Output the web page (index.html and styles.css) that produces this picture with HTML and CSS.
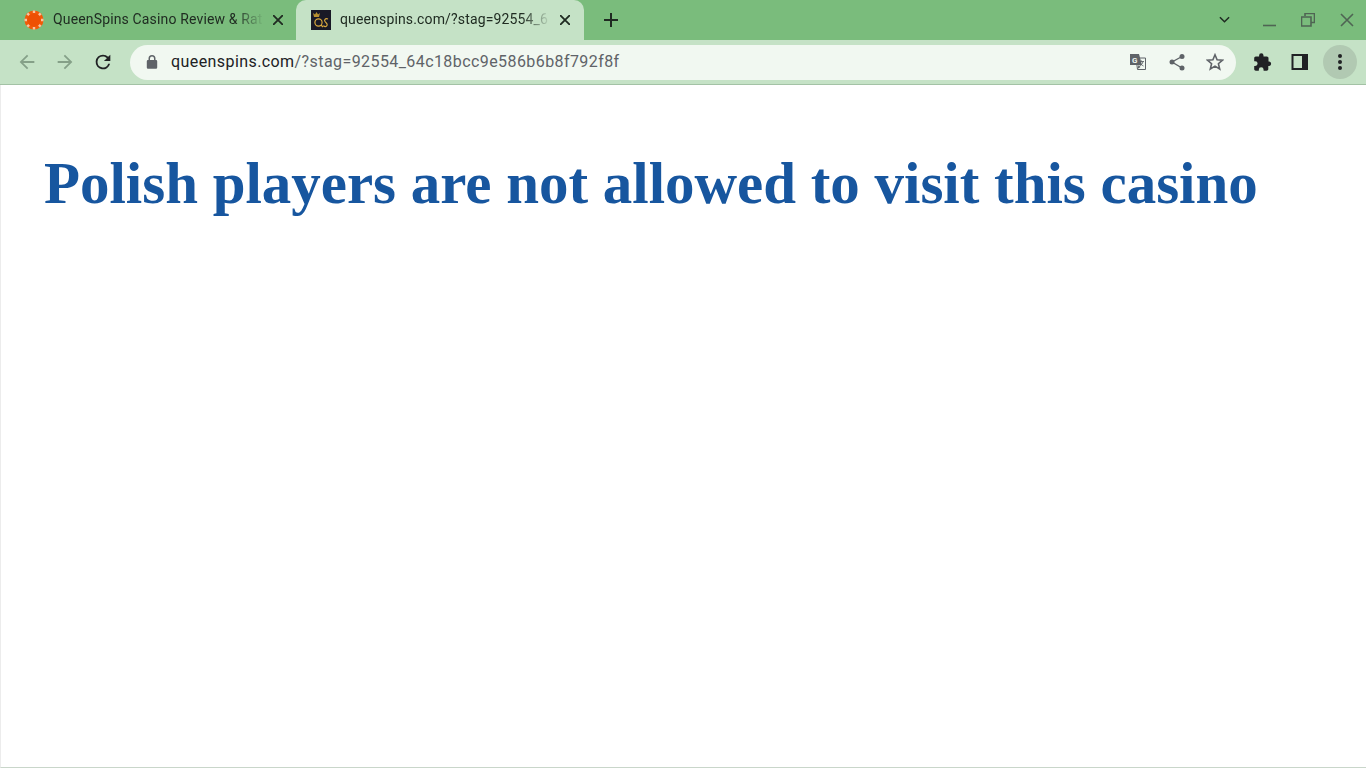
FILE: index.html
```html
<!DOCTYPE html>
<html lang="en">
<head>
  <meta charset="UTF-8" />
  <title>queenspins.com</title>
  <link rel="stylesheet" href="styles.css">
</head>
<body>

  <div class="tabstrip">
    <div class="tab">
      <svg class="favicon" viewBox="0 0 20 20">
        <circle cx="10" cy="10" r="9.500" fill="#f25a08"/>
        <circle cx="10" cy="10" r="6.500" fill="#ee5003"/>
        <g stroke="#f8c4a0" stroke-width="2.400">
          <path d="M10 .5v2.500M10 17v2.500M.5 10H3M17 10h2.500M3.300 3.300l1.800 1.800M14.900 14.900l1.800 1.800M16.700 3.300l-1.800 1.800M3.300 16.700l1.800-1.800"/>
        </g>
      </svg>
      <span class="tab-title">QueenSpins Casino Review &amp; Rat</span>
      <svg class="tab-close" viewBox="0 0 10 10"><path d="M0 0l10 10M10 0L0 10"/></svg>
    </div>
    <div class="tab active">
      <svg class="favicon" viewBox="0 0 20 20">
        <rect width="20" height="20" fill="#191926"/>
        <path d="M2 3l2 1.500L5.500 2 7 4.500 9 3l-1 4H3z" fill="#b8912f"/>
        <circle cx="7.500" cy="12.500" r="3.600" fill="none" stroke="#d9a93e" stroke-width="1.200"/>
        <path d="M10 15l2 2M17 9c-3-1-4 1-3 2.500s3 2 2 4-3 1-3.500 0" fill="none" stroke="#d9a93e" stroke-width="1.200"/>
      </svg>
      <span class="tab-title">queenspins.com/?stag=92554_6</span>
      <svg class="tab-close" viewBox="0 0 10 10"><path d="M0 0l10 10M10 0L0 10"/></svg>
    </div>
    <svg class="new-tab" viewBox="0 0 14 14"><path d="M7 0v14M0 7h14"/></svg>
    <div class="window-controls">
      <svg class="tab-search" viewBox="0 0 12 8"><path d="M1 1l5 5 5-5"/></svg>
      <svg class="win-btn" viewBox="0 0 14 14"><path d="M0 12.500h13"/></svg>
      <svg class="win-btn" viewBox="0 0 14 14"><path d="M4 3V.5h9.500v9H10M.5 4H10v9H.5z"/></svg>
      <svg class="win-btn" viewBox="0 0 14 14"><path d="M1 1l12 12M13 1L1 13"/></svg>
    </div>
  </div>

  <div class="toolbar">
    <svg class="nav-btn dim" viewBox="0 0 24 24"><path d="M20 11H7.800l5.600-5.600L12 4l-8 8 8 8 1.400-1.400L7.800 13H20z"/></svg>
    <svg class="nav-btn dim" viewBox="0 0 24 24"><path d="M4 11h12.200l-5.600-5.600L12 4l8 8-8 8-1.400-1.400 5.600-5.600H4z"/></svg>
    <svg class="nav-btn" viewBox="0 0 24 24"><path d="M17.650 6.350A7.960 7.960 0 0 0 12 4a8 8 0 1 0 7.730 10h-2.080A6 6 0 1 1 12 6c1.660 0 3.140.69 4.220 1.780L13 11h7V4z"/></svg>
    <div class="omnibox">
      <svg class="lock" viewBox="0 0 12 14"><path d="M10 5H9.500V3.500a3.500 3.500 0 0 0-7 0V5H2a1.200 1.200 0 0 0-1.200 1.200v6.300A1.200 1.200 0 0 0 2 13.700h8a1.200 1.200 0 0 0 1.200-1.200V6.200A1.200 1.200 0 0 0 10 5zM4 5V3.500a2 2 0 0 1 4 0V5z"/></svg>
      <span class="url"><span class="host">queenspins.com</span>/?stag=92554_64c18bcc9e586b6b8f792f8f</span>
      <div class="omni-actions">
        <svg class="omni-icon" viewBox="0 0 18 18">
          <path d="M7 5h9.500v11.500H8.500z" fill="#f1f8f1" stroke="#5f6368"/>
          <path d="M1 1h9l3 11H1z" fill="#5f6368"/>
          <path d="M9.500 12l-1 4 3-2z" fill="#5f6368"/>
          <text x="3" y="10" class="glyph">G</text>
          <path d="M10 8.500h5M12.500 7.500v1M14 8.500c-.5 2.500-2 4-3.500 4.500M11 9.500c.5 1.500 2 3 3.500 3.500" fill="none" stroke="#5f6368" stroke-width=".9"/>
        </svg>
        <svg class="omni-icon" viewBox="0 0 18 18">
          <circle cx="14" cy="3.500" r="2.500" fill="#5f6368"/><circle cx="4" cy="9" r="2.500" fill="#5f6368"/><circle cx="14" cy="15" r="2.500" fill="#5f6368"/>
          <path d="M14 3.500L4 9l10 6" fill="none" stroke="#5f6368" stroke-width="1.400"/>
        </svg>
        <svg class="omni-icon" viewBox="0 0 18 18"><path d="M9 1.800l2.100 5 5.400.4-4.100 3.500 1.300 5.300L9 13.100 4.300 16l1.300-5.300L1.500 7.200l5.400-.4z" fill="none" stroke="#5f6368" stroke-width="1.600"/></svg>
      </div>
    </div>
    <svg class="ext-btn puzzle" viewBox="0 0 18 18"><path d="M15.500 8.500h-1V5.200c0-.9-.7-1.700-1.700-1.700H9.500v-1a2.200 2.200 0 0 0-4.400 0v1H1.800C.9 3.500.2 4.300.2 5.200v3h1a2.400 2.400 0 0 1 0 4.800h-1v3c0 .9.700 1.700 1.600 1.700h3v-1a2.400 2.400 0 0 1 4.800 0v1h3c1 0 1.700-.8 1.700-1.700v-3h1a2.300 2.300 0 0 0 0-4.500z"/></svg>
    <svg class="ext-btn" viewBox="0 0 18 18"><path fill-rule="evenodd" d="M.5 1h16.500v16H.5zM2.500 3v12H11V3z"/></svg>
    <div class="menu-btn"><span></span><span></span><span></span></div>
  </div>

  <main class="page">
    <h1 class="page-title">Polish players are not allowed to visit this casino</h1>
  </main>

</body>
</html>
```

FILE: styles.css
```css
* { margin: 0; padding: 0; box-sizing: border-box; }

html, body { height: 100%; overflow: hidden; }

body {
  display: flex; flex-direction: column;
  font-family: 'Roboto', sans-serif;
  background: #fff;
}

svg { display: block; flex-shrink: 0; }

/* tab strip */
.tabstrip {
  display: flex; align-items: center;
  height: 40px;
  background: #7abc7c;
  padding-left: 8px;
}

.tab {
  display: flex; align-items: center;
  width: 288px; height: 40px;
  padding: 0 13px 0 16px;
  font-size: 14px;
  letter-spacing: 0.15px;
  color: #202c22;
}

.tab.active {
  background: #c5e2c6;
  border-radius: 10px 10px 0 0;
  padding-left: 15px;
  padding-right: 14px;
}

.favicon { width: 20px; height: 20px; margin-right: 9px; }

.tab-title {
  flex: 1; min-width: 0;
  white-space: nowrap; overflow: hidden;
  padding-bottom: 2px;
  -webkit-mask-image: linear-gradient(to right, #000 86%, transparent 100%);
  mask-image: linear-gradient(to right, #000 86%, transparent 100%);
}

.tab-close {
  width: 10px; height: 10px; margin-left: 9px;
  fill: none; stroke: #1f2a21; stroke-width: 1.8;
}

.new-tab {
  width: 14px; height: 14px; margin-left: 20px;
  fill: none; stroke: #1f2a21; stroke-width: 2;
}

.window-controls {
  display: flex; align-items: center;
  margin-left: auto; padding-right: 12px;
}

.tab-search {
  width: 11px; height: 8px; margin-right: 33px;
  fill: none; stroke: #1f2a21; stroke-width: 1.6;
}

.win-btn {
  width: 14px; height: 14px; margin-left: 24px;
  fill: none; stroke: #4f6453; stroke-width: 1.6;
}
.win-btn:last-child { margin-left: 25px; }
.tab-search + .win-btn { margin-left: 0; }

/* toolbar */
.toolbar {
  display: flex; align-items: center;
  height: 45px;
  background: #c5e2c6;
  border-bottom: 1px solid #a3c2a5;
  padding: 0 9px 0 16px;
}

.nav-btn { width: 22px; height: 22px; margin-right: 16px; fill: #202124; }
.nav-btn.dim { fill: #85a088; }

.omnibox {
  display: flex; align-items: center;
  flex: 1; height: 35px;
  margin-right: 18px;
  padding: 0 12px 0 16px;
  background: #f1f8f1;
  border-radius: 18px;
}

.lock { width: 12px; height: 14px; fill: #5f6368; margin-right: 13px; }

.url { font-size: 16px; color: #5f6368; letter-spacing: 0.42px; white-space: nowrap; padding-bottom: 2px; }
.host { color: #202124; }

.omni-actions { display: flex; align-items: center; gap: 20.5px; margin-left: auto; }
.omni-icon { width: 18px; height: 18px; }
.glyph { font-size: 8px; font-weight: 700; fill: #f1f8f1; }

.ext-btn { width: 18px; height: 18px; margin-right: 20px; fill: #202124; }
.ext-btn.puzzle { margin-right: 19px; }

.menu-btn {
  display: flex; flex-direction: column; align-items: center; justify-content: center;
  gap: 2px;
  width: 34px; height: 34px;
  border-radius: 50%;
  background: #b1c9b2;
  margin-left: -6px;
}
.menu-btn span { width: 4px; height: 4px; border-radius: 50%; background: #202124; }

/* page body */
.page {
  flex: 1;
  border-left: 1px solid #ececec;
  border-bottom: 1px solid #c9d6ca;
  padding: 64px 43px 0;
}

.page-title {
  font-family: 'Liberation Serif', 'Times New Roman', serif;
  font-size: 58.95px; font-weight: 700;
  line-height: 68px;
  color: #17569f;
  white-space: nowrap;
}
```
